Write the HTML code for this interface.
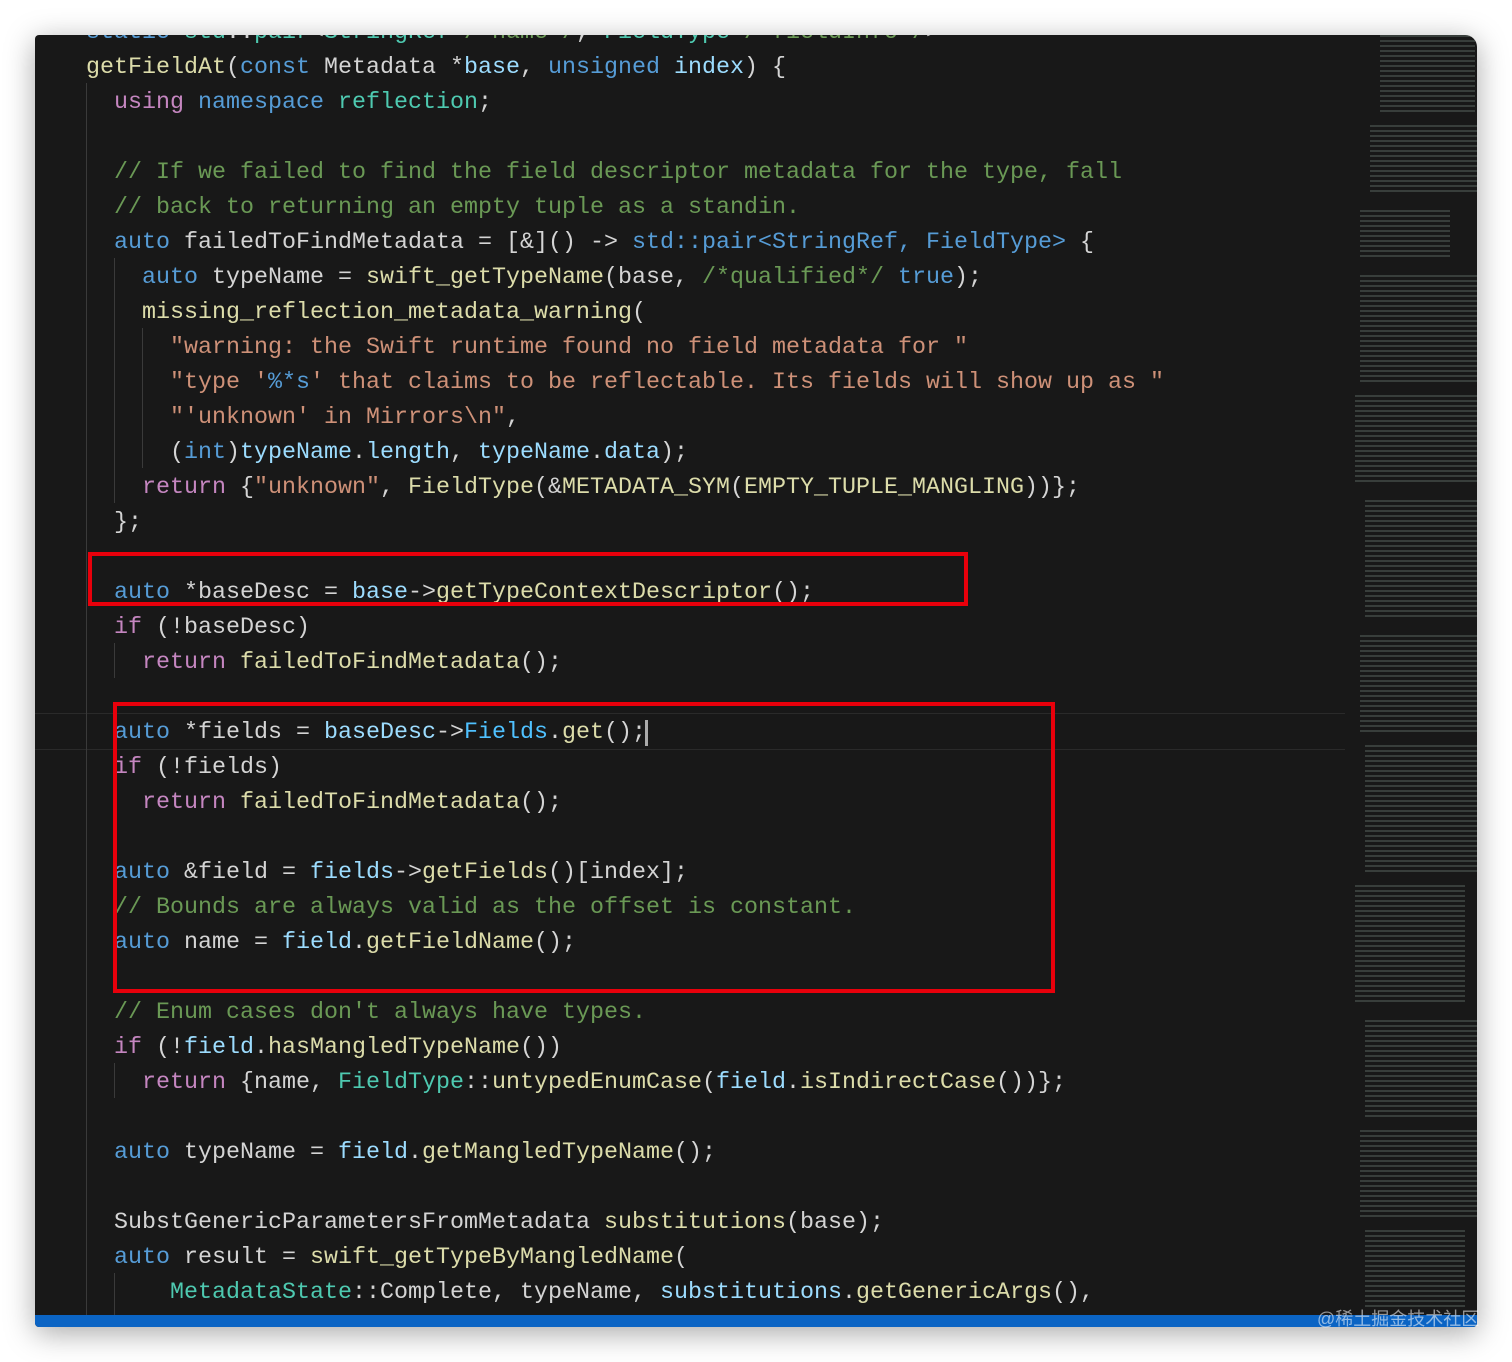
<!DOCTYPE html>
<html><head><meta charset="utf-8"><style>
body{margin:0;background:#fff;width:1512px;height:1362px;overflow:hidden;position:relative}
.win{position:absolute;left:35px;top:35px;width:1442px;height:1292px;background:#181818;border-radius:4px 12px 4px 4px;overflow:hidden;box-shadow:0 6px 30px rgba(0,0,0,.35)}
pre{position:absolute;left:51px;top:-19px;margin:0;font-family:"Liberation Mono",monospace;font-size:23.33px;line-height:35px;color:#d4d4d4;white-space:pre}
.k{color:#569cd6}.c{color:#c586c0}.f{color:#dcdcaa}.v{color:#9cdcfe}.t{color:#4ec9b0}.s{color:#ce9178}.m{color:#6a9955}.b{color:#4fc1ff}
.g{position:absolute;width:1px;background:#3a3a3a}
.cur{position:absolute;left:0;width:1310px;top:678px;height:35px;border-top:1px solid #2a2a2a;border-bottom:1px solid #2a2a2a}
.box{position:absolute;border:4px solid #e8000b}
.mb{position:absolute;height:60px;background:repeating-linear-gradient(180deg,rgba(140,160,150,.28) 0 2px,transparent 2px 5px)}
.status{position:absolute;left:0;bottom:0;width:1442px;height:12px;background:#0b64c4}
.wm{position:absolute;left:1317px;top:1305px;font-family:"Liberation Sans","Noto Sans CJK SC",sans-serif;font-size:18px;color:rgba(255,255,255,.55)}
</style></head><body>
<div class="win">
<div class="cur"></div>
<div class="g" style="left:51px;top:48px;height:1250px"></div>
<div class="g" style="left:79px;top:223px;height:245px"></div>
<div class="g" style="left:107px;top:293px;height:140px"></div>
<div class="g" style="left:79px;top:608px;height:35px"></div>
<div class="g" style="left:79px;top:748px;height:35px"></div>
<div class="g" style="left:79px;top:1028px;height:35px"></div>
<div class="g" style="left:79px;top:1238px;height:60px"></div>
<div class="mb" style="left:1345px;top:0;width:95px;height:80px"></div>
<div class="mb" style="left:1335px;top:90px;width:107px;height:70px"></div>
<div class="mb" style="left:1325px;top:175px;width:90px;height:50px"></div>
<div class="mb" style="left:1325px;top:240px;width:117px;height:110px"></div>
<div class="mb" style="left:1320px;top:360px;width:122px;height:90px"></div>
<div class="mb" style="left:1330px;top:465px;width:112px;height:120px"></div>
<div class="mb" style="left:1325px;top:600px;width:117px;height:100px"></div>
<div class="mb" style="left:1330px;top:710px;width:112px;height:130px"></div>
<div class="mb" style="left:1320px;top:850px;width:110px;height:120px"></div>
<div class="mb" style="left:1330px;top:985px;width:112px;height:100px"></div>
<div class="mb" style="left:1325px;top:1095px;width:117px;height:90px"></div>
<div class="mb" style="left:1330px;top:1195px;width:100px;height:80px"></div>
<pre><span class="k">static</span> <span class="t">std</span>::<span class="t">pair</span>&lt;<span class="t">StringRef</span> <span class="m">/*name*/</span>, <span class="t">FieldType</span> <span class="m">/*fieldInfo*/</span>&gt;
<span class="f">getFieldAt</span>(<span class="k">const</span> Metadata *<span class="v">base</span>, <span class="k">unsigned</span> <span class="v">index</span>) {
  <span class="c">using</span> <span class="k">namespace</span> <span class="t">reflection</span>;

  <span class="m">// If we failed to find the field descriptor metadata for the type, fall</span>
  <span class="m">// back to returning an empty tuple as a standin.</span>
  <span class="k">auto</span> failedToFindMetadata = [&amp;]() -&gt; <span class="k">std::pair&lt;StringRef, FieldType&gt;</span> {
    <span class="k">auto</span> typeName = <span class="f">swift_getTypeName</span>(base, <span class="m">/*qualified*/</span> <span class="k">true</span>);
    <span class="f">missing_reflection_metadata_warning</span>(
      <span class="s">"warning: the Swift runtime found no field metadata for "</span>
      <span class="s">"type '</span><span class="k">%*s</span><span class="s">' that claims to be reflectable. Its fields will show up as "</span>
      <span class="s">"'unknown' in Mirrors\n"</span>,
      (<span class="k">int</span>)<span class="v">typeName</span>.<span class="v">length</span>, <span class="v">typeName</span>.<span class="v">data</span>);
    <span class="c">return</span> {<span class="s">"unknown"</span>, <span class="f">FieldType</span>(&amp;<span class="f">METADATA_SYM</span>(<span class="f">EMPTY_TUPLE_MANGLING</span>))};
  };

  <span class="k">auto</span> *baseDesc = <span class="v">base</span>-&gt;<span class="f">getTypeContextDescriptor</span>();
  <span class="c">if</span> (!baseDesc)
    <span class="c">return</span> <span class="f">failedToFindMetadata</span>();

  <span class="k">auto</span> *fields = <span class="v">baseDesc</span>-&gt;<span class="b">Fields</span>.<span class="f">get</span>();<span style="border-left:3px solid #aaa;margin-left:-1px"></span>
  <span class="c">if</span> (!fields)
    <span class="c">return</span> <span class="f">failedToFindMetadata</span>();

  <span class="k">auto</span> &amp;field = <span class="v">fields</span>-&gt;<span class="f">getFields</span>()[index];
  <span class="m">// Bounds are always valid as the offset is constant.</span>
  <span class="k">auto</span> name = <span class="v">field</span>.<span class="f">getFieldName</span>();

  <span class="m">// Enum cases don't always have types.</span>
  <span class="c">if</span> (!<span class="v">field</span>.<span class="f">hasMangledTypeName</span>())
    <span class="c">return</span> {name, <span class="t">FieldType</span>::<span class="f">untypedEnumCase</span>(<span class="v">field</span>.<span class="f">isIndirectCase</span>())};

  <span class="k">auto</span> typeName = <span class="v">field</span>.<span class="f">getMangledTypeName</span>();

  SubstGenericParametersFromMetadata <span class="f">substitutions</span>(base);
  <span class="k">auto</span> result = <span class="f">swift_getTypeByMangledName</span>(
      <span class="t">MetadataState</span>::Complete, typeName, <span class="v">substitutions</span>.<span class="f">getGenericArgs</span>(),
      [&amp;<span class="v">substitutions</span>](<span class="k">const</span> <span class="t">GenericParamDescriptor</span> *<span class="v">param</span>) {</pre>
<div class="box" style="left:53px;top:517px;width:872px;height:46px"></div>
<div class="box" style="left:78px;top:667px;width:934px;height:283px"></div>
<div class="status"></div>
</div>
<div class="wm">@稀土掘金技术社区</div>
</body></html>
